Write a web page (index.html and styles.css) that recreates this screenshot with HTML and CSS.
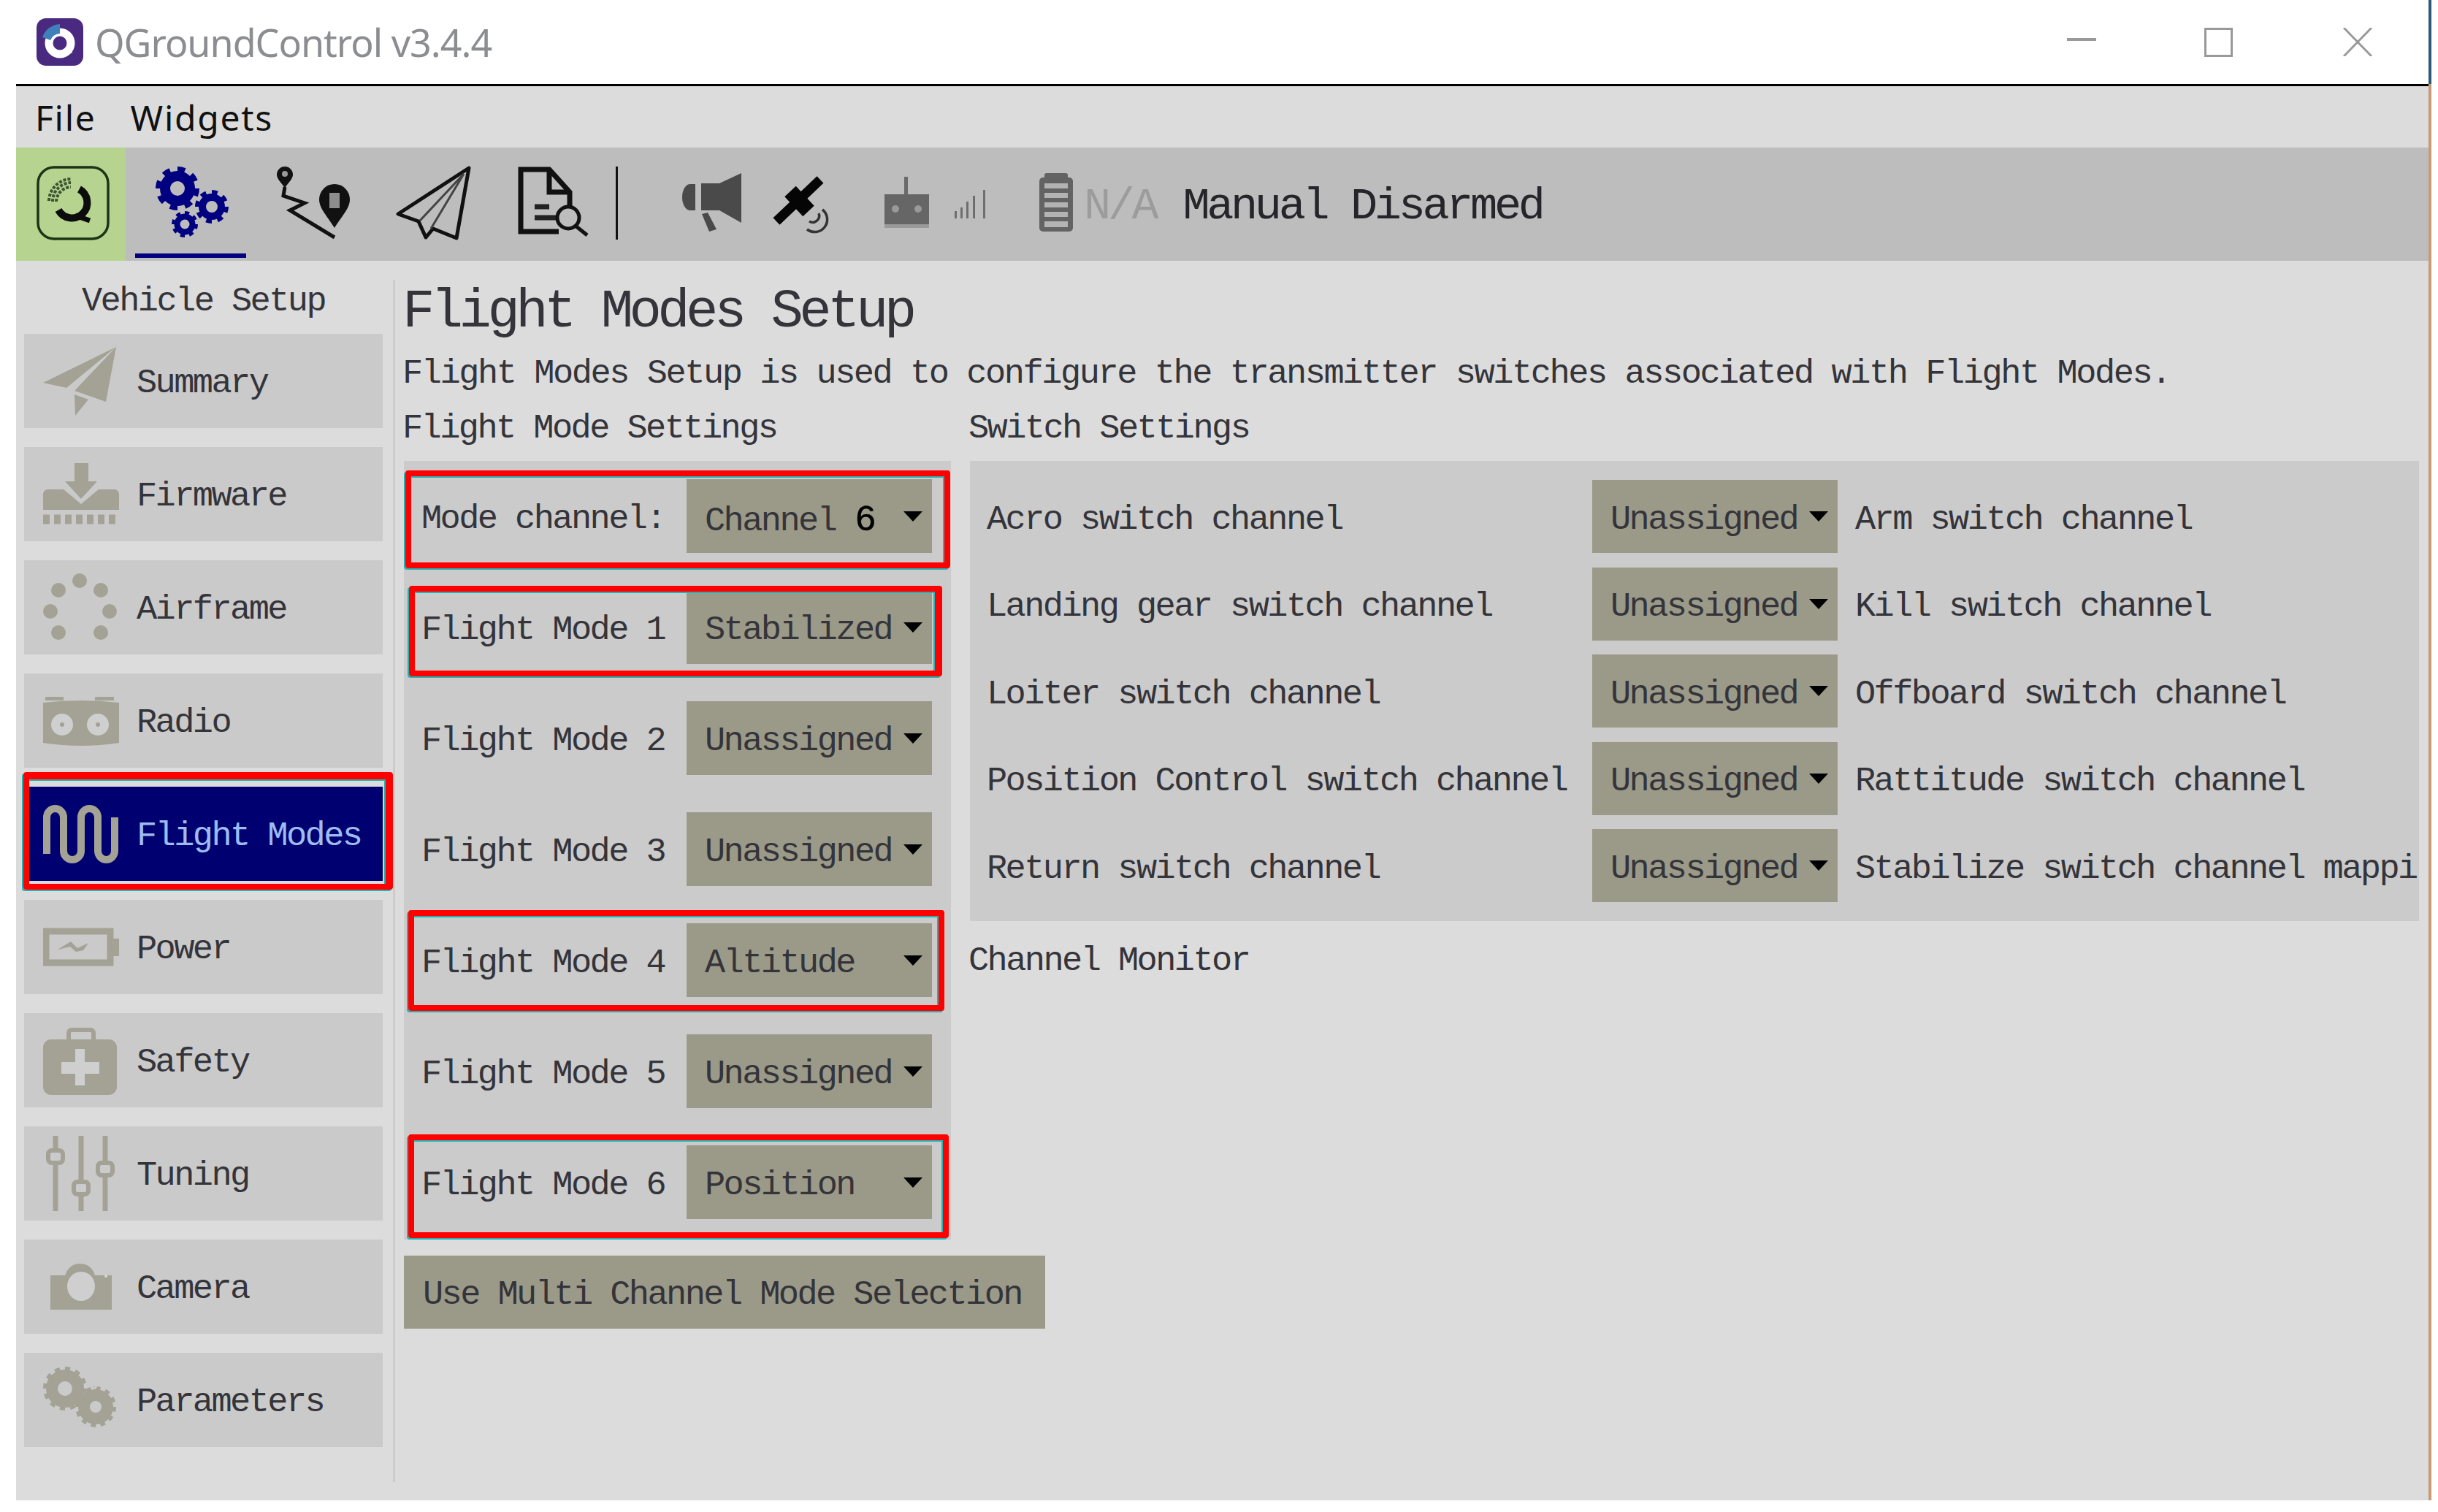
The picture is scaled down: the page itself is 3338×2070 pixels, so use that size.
FILE: index.html
```html
<!DOCTYPE html>
<html lang="en">
	<head>
		<meta charset="utf-8" />
		<title>QGroundControl v3.4.4</title>
		<link rel="stylesheet" href="styles.css">
	</head>
	<body>
		<div class="window">
			<div class="titlebar">
				<svg class="app-icon" width="64" height="65" viewBox="50 24 64 65">
					<rect x="50" y="24" width="64" height="65" rx="13" fill="#4a2a80"/>
					<circle cx="82" cy="58" r="15" fill="none" stroke="#fff" stroke-width="11"/>
					<path d="M88,68 L99,72 L96,60 Z" fill="#fff"/>
					<path d="M58,50 A27,27 0 0 1 82,32 L82,45 A14,14 0 0 0 69,54 Z" fill="#3f80ba"/>
					<circle cx="81" cy="56" r="6" fill="#4a2a80"/>
				</svg>
				<span class="app-title">QGroundControl v3.4.4</span>
				<div class="win-btns">
					<span class="win-min"></span>
					<span class="win-max"></span>
					<svg class="win-close" width="40" height="39" viewBox="0 0 40 39">
						<path d="M1,0 L39,39 M39,0 L1,39" stroke="#999" stroke-width="3"/>
					</svg>
				</div>
			</div>

			<div class="menubar">
				<span class="menu-file">File</span>
				<span>Widgets</span>
			</div>

			<div class="toolbar">
				<div class="tool-logo">
					<svg width="150" height="155" viewBox="22 202 150 155">
						<rect x="52" y="229" width="96" height="98" rx="22" fill="none" stroke="#1f3316" stroke-width="3.5"/>
						<path d="M108.500,259 A21,21 0 1 1 80,287.500" fill="none" stroke="#0c0c0c" stroke-width="10"/>
						<path d="M103,295 L123,302" stroke="#0c0c0c" stroke-width="7"/>
						<path d="M72,276 A26,26 0 0 1 97,250 M67,275 A31,31 0 0 1 97,245" fill="none" stroke="#3c5532" stroke-width="4" stroke-dasharray="4 2"/>
						<path d="M77,276 A21,21 0 0 1 97,256" fill="none" stroke="#3c5532" stroke-width="4" stroke-dasharray="4 2"/>
					</svg>
				</div>
				<svg class="tool-icon" width="170" height="155" viewBox="172 202 170 155">
					<g fill="none" stroke="#000080">
						<circle cx="243" cy="258" r="17" stroke-width="14"/>
						<circle cx="243" cy="258" r="25" stroke-width="10" pathLength="16" stroke-dasharray="1 1"/>
						<circle cx="290" cy="283" r="13" stroke-width="10"/>
						<circle cx="290" cy="283" r="19" stroke-width="8" pathLength="16" stroke-dasharray="1 1"/>
						<circle cx="253" cy="307" r="10.500" stroke-width="8"/>
						<circle cx="253" cy="307" r="15" stroke-width="6" pathLength="16" stroke-dasharray="1 1"/>
					</g>
					<rect x="185" y="347" width="152" height="6" fill="#000080"/>
				</svg>
				<svg class="tool-icon" width="520" height="155" viewBox="342 202 520 155">
					<!-- plan -->
					<path d="M390,257 C383,248 379,244 379,239 A11,11 0 0 1 401,239 C401,244 397,248 390,257 Z" fill="#111"/>
					<circle cx="390" cy="238" r="4" fill="#999"/>
					<path d="M390,256 L388,268 L417,278 L397,288 L458,325" fill="none" stroke="#111" stroke-width="5"/>
					<path d="M458,312 C448,296 437,285 437,273 A21,21 0 0 1 479,273 C479,285 468,296 458,312 Z" fill="#111"/>
					<rect x="451" y="264" width="14" height="21" fill="#8d8d8d"/>
					<!-- fly -->
					<path d="M642,230 L545,293 L573,303 L583,325 L593,313 L625,326 Z" fill="none" stroke="#111" stroke-width="5" stroke-linejoin="round"/>
					<path d="M635,238 L575,302 M635,238 L590,313" stroke="#444" stroke-width="3"/>
					<!-- analyze -->
					<path d="M765,317 H713 V232 H752 L780,263 V283 M752,232 V263 H780" fill="none" stroke="#111" stroke-width="7"/>
					<path d="M732,283 H752" stroke="#222" stroke-width="7"/>
					<path d="M732,298 H763" stroke="#222" stroke-width="7"/>
					<circle cx="778" cy="298" r="15" fill="#bdbdbd" stroke="#111" stroke-width="5"/>
					<path d="M789,310 L804,322" stroke="#111" stroke-width="5"/>
					<rect x="843" y="228" width="3" height="100" fill="#111"/>
				</svg>
				<svg class="tool-icon" width="500" height="155" viewBox="862 202 500 155">
					<!-- messages -->
					<g fill="#4a4a4a">
						<path d="M952,252 H945 A11,18 0 0 0 945,288 H952 Z"/>
						<path d="M960,251 H985 L1015,237 V305 L985,288 H960 Z"/>
						<path d="M961,293 L969,291 L981,314 L971,317 Z"/>
					</g>
					<!-- gps -->
					<path d="M1063,303 L1123,246" stroke="#050505" stroke-width="13"/>
					<path d="M1082,262 L1107,289" stroke="#050505" stroke-width="21"/>
					<path d="M1126,287 A17,17 0 0 1 1105,314 M1121,292 A9,9 0 0 1 1108,303" fill="none" stroke="#333" stroke-width="3.500"/>
					<!-- rc -->
					<rect x="1238" y="242" width="5" height="25" fill="#6a6a6a"/>
					<rect x="1211" y="266" width="61" height="41" fill="#666"/>
					<rect x="1211" y="307" width="61" height="5" fill="#9a9a9a"/>
					<circle cx="1226" cy="286" r="5" fill="#999"/>
					<circle cx="1257" cy="286" r="5" fill="#999"/>
					<!-- signal -->
					<g fill="#6e6e6e">
						<rect x="1307" y="289" width="3" height="10"/>
						<rect x="1315" y="284" width="3" height="15"/>
						<rect x="1323" y="276" width="3" height="23"/>
						<rect x="1332" y="268" width="3" height="31"/>
						<rect x="1346" y="260" width="3" height="39"/>
					</g>
				</svg>
				<svg class="tool-icon tool-battery" width="62" height="155" viewBox="1422 202 62 155">
					<rect x="1430" y="237" width="32" height="10" rx="3" fill="#636363"/>
					<rect x="1423" y="243" width="46" height="74" rx="5" fill="#636363"/>
					<g fill="#b3b3b3">
						<rect x="1430" y="251" width="32" height="7"/>
						<rect x="1430" y="264" width="32" height="7"/>
						<rect x="1430" y="277" width="32" height="7"/>
						<rect x="1430" y="290" width="32" height="7"/>
						<rect x="1430" y="303" width="32" height="8"/>
					</g>
				</svg>
				<span class="tool-na">N/A</span>
				<span class="tool-state">Manual Disarmed</span>
			</div>

			<div class="main">
				<div class="sidebar">
					<div class="side-title">Vehicle Setup</div>

					<div class="side-btn">
						<svg width="104" height="129" viewBox="0 -18 104 129">
							<path d="M100,0 L0,49 L32,56 Z M100,0 L43,60 L86,75 Z M43,65 L44,94 L62,72 Z" fill="#a3a295"/>
						</svg>
						<span>Summary</span>
					</div>

					<div class="side-btn">
						<svg width="104" height="129" viewBox="0 -22 104 129">
							<path d="M43,0 H62 V25 H74 L52,49 L30,25 H43 Z" fill="#a3a295"/>
							<path d="M7,36 H28 L52,56 L76,36 H97 Q104,36 104,44 V64 H0 V44 Q0,36 7,36 Z" fill="#a3a295"/>
							<path d="M0,77 H104" stroke="#a3a295" stroke-width="13" stroke-dasharray="9 6"/>
						</svg>
						<span>Firmware</span>
					</div>

					<div class="side-btn">
						<svg width="104" height="129" viewBox="0 -17 104 129">
							<g fill="#a3a295">
								<circle cx="50" cy="11" r="10"/>
								<circle cx="21" cy="24" r="10"/>
								<circle cx="79" cy="24" r="10"/>
								<circle cx="10" cy="53" r="10"/>
								<circle cx="91" cy="53" r="10"/>
								<circle cx="21" cy="82" r="10"/>
								<circle cx="79" cy="82" r="10"/>
							</g>
						</svg>
						<span>Airframe</span>
					</div>

					<div class="side-btn">
						<svg width="104" height="129" viewBox="0 -31 104 129">
							<path d="M3,1 H28 V6 H3 Z M71,1 H97 V6 H71 Z" fill="#a3a295"/>
							<path d="M0,9 Q52,3 104,9 V64 Q52,72 0,64 Z" fill="#a3a295"/>
							<circle cx="26" cy="39" r="15" fill="#cfcfcf"/>
							<circle cx="75" cy="39" r="15" fill="#cfcfcf"/>
							<circle cx="26" cy="39" r="3" fill="#a3a295"/>
							<circle cx="75" cy="39" r="3" fill="#a3a295"/>
						</svg>
						<span>Radio</span>
					</div>

					<div class="side-btn side-active">
						<svg width="104" height="129" viewBox="0 -25 104 129">
							<path d="M0,62 H5 V17 A11.500,12 0 0 1 28,17 V63 A12,12 0 0 0 52,63 V17 A11.500,12 0 0 1 75,17 V63 A11.500,12 0 0 0 98,63 V17" fill="none" stroke="#a3a295" stroke-width="10"/>
						</svg>
						<span>Flight Modes</span>
					</div>

					<div class="side-btn">
						<svg width="104" height="129" viewBox="0 -38 104 129">
							<rect x="4" y="5" width="88" height="43" fill="none" stroke="#a3a295" stroke-width="9"/>
							<rect x="94" y="15" width="10" height="24" fill="#a3a295"/>
							<path d="M20,30 L38,19 L47,28 L62,21 L55,31 L45,33 L37,26 Z" fill="#a3a295"/>
						</svg>
						<span>Power</span>
					</div>

					<div class="side-btn">
						<svg width="104" height="129" viewBox="0 -20 104 129">
							<rect x="35" y="3" width="34" height="20" rx="4" fill="none" stroke="#a3a295" stroke-width="6"/>
							<rect x="0" y="16" width="101" height="76" rx="11" fill="#a3a295"/>
							<path d="M25,47 H44 V29 H57 V47 H77 V63 H57 V79 H44 V63 H25 Z" fill="#cfcfcf"/>
						</svg>
						<span>Safety</span>
					</div>

					<div class="side-btn">
						<svg width="104" height="129" viewBox="0 -13 104 129">
							<path d="M17,0 V103 M52,0 V103 M85,0 V103" stroke="#a3a295" stroke-width="7"/>
							<rect x="7" y="20" width="20" height="17" rx="5" fill="#cbcbcb" stroke="#a3a295" stroke-width="6"/>
							<rect x="42" y="63" width="20" height="17" rx="5" fill="#cbcbcb" stroke="#a3a295" stroke-width="6"/>
							<rect x="75" y="37" width="20" height="17" rx="5" fill="#cbcbcb" stroke="#a3a295" stroke-width="6"/>
						</svg>
						<span>Tuning</span>
					</div>

					<div class="side-btn">
						<svg width="104" height="129" viewBox="0 -33 104 129">
							<path d="M15,16 H30 Q36,0 50,0 Q66,0 71,16 H94 V63 H10 V16 Z" fill="#a3a295"/>
							<ellipse cx="52" cy="31" rx="19" ry="20" fill="#cfcfcf"/>
							<circle cx="86" cy="17" r="2" fill="#d8d8d8"/>
						</svg>
						<span>Camera</span>
					</div>

					<div class="side-btn">
						<svg width="104" height="129" viewBox="0 -15 104 129">
							<g fill="none" stroke="#a3a295">
								<circle cx="30" cy="34" r="18" stroke-width="16"/>
								<circle cx="30" cy="34" r="27" stroke-width="6" pathLength="24" stroke-dasharray="1 1"/>
								<circle cx="72" cy="59" r="16" stroke-width="16"/>
								<circle cx="72" cy="59" r="25" stroke-width="6" pathLength="24" stroke-dasharray="1 1"/>
							</g>
						</svg>
						<span>Parameters</span>
					</div>
				</div>
				<div class="divider"></div>

				<div class="content">
					<div class="page-title">Flight Modes Setup</div>
					<div class="line page-desc">Flight Modes Setup is used to configure the transmitter switches associated with Flight Modes.</div>

					<div class="cols">
						<div class="col-modes">
							<div class="line">Flight Mode Settings</div>
							<div class="modes-panel">
								<div class="mode-row">
									<span class="mode-label">Mode channel:</span>
									<div class="combo"><span>Channel<b class="added-digit">6</b></span><i class="arrow"></i></div>
								</div>
								<div class="mode-row">
									<span class="mode-label">Flight Mode 1</span>
									<div class="combo"><span>Stabilized</span><i class="arrow"></i></div>
								</div>
								<div class="mode-row">
									<span class="mode-label">Flight Mode 2</span>
									<div class="combo"><span>Unassigned</span><i class="arrow"></i></div>
								</div>
								<div class="mode-row">
									<span class="mode-label">Flight Mode 3</span>
									<div class="combo"><span>Unassigned</span><i class="arrow"></i></div>
								</div>
								<div class="mode-row">
									<span class="mode-label">Flight Mode 4</span>
									<div class="combo"><span>Altitude</span><i class="arrow"></i></div>
								</div>
								<div class="mode-row">
									<span class="mode-label">Flight Mode 5</span>
									<div class="combo"><span>Unassigned</span><i class="arrow"></i></div>
								</div>
								<div class="mode-row">
									<span class="mode-label">Flight Mode 6</span>
									<div class="combo"><span>Position</span><i class="arrow"></i></div>
								</div>
							</div>
							<div class="multi-btn">Use Multi Channel Mode Selection</div>
						</div>

						<div class="col-switches">
							<div class="line">Switch Settings</div>
							<div class="switch-panel">
								<div class="switch-row">
									<span class="switch-label">Acro switch channel</span>
									<div class="combo"><span>Unassigned</span><i class="arrow"></i></div>
									<span class="switch-right">Arm switch channel</span>
								</div>
								<div class="switch-row">
									<span class="switch-label">Landing gear switch channel</span>
									<div class="combo"><span>Unassigned</span><i class="arrow"></i></div>
									<span class="switch-right">Kill switch channel</span>
								</div>
								<div class="switch-row">
									<span class="switch-label">Loiter switch channel</span>
									<div class="combo"><span>Unassigned</span><i class="arrow"></i></div>
									<span class="switch-right">Offboard switch channel</span>
								</div>
								<div class="switch-row">
									<span class="switch-label">Position Control switch channel</span>
									<div class="combo"><span>Unassigned</span><i class="arrow"></i></div>
									<span class="switch-right">Rattitude switch channel</span>
								</div>
								<div class="switch-row">
									<span class="switch-label">Return switch channel</span>
									<div class="combo"><span>Unassigned</span><i class="arrow"></i></div>
									<span class="switch-right">Stabilize switch channel mappi</span>
								</div>
							</div>
							<div class="line monitor-title">Channel Monitor</div>
						</div>
					</div>
				</div>
			</div>

			<!-- red boxes drawn over the screenshot -->
			<div class="mark mark-side"></div>
			<div class="mark mark-channel"></div>
			<div class="mark mark-fm1"></div>
			<div class="mark mark-fm4"></div>
			<div class="mark mark-fm6"></div>
		</div>
	</body>
</html>
```

FILE: styles.css
```css
body, html {
	margin:0;
	padding:0;
	background:#fff;
}
.window {
	position:relative;
	width:3303px;
	margin-left:22px;
	border-right:4px solid #c99a74;
	background:#dcdcdc;
	font-family:"Liberation Mono", monospace;
	color:#34343a;
	font-size:47px;
	letter-spacing:-2.58px;
}

/* title bar */
.titlebar {
	display:flex;
	align-items:center;
	height:115px;
	margin-right:-4px;
	padding-left:28px;
	box-sizing:border-box;
	background:#fff;
	border-right:4px solid #2e5878;
	font-family:"Noto Sans", sans-serif;
}
.app-icon {
	margin-right:16px;
}
.app-title {
	font-size:52px;
	letter-spacing:-1px;
	color:#8b8d90;
}
.win-btns {
	display:flex;
	align-items:center;
	margin-left:auto;
	margin-right:77px;
}
.win-min {
	width:40px;
	height:4px;
	margin-top:-8px;
	margin-right:148px;
	background:#999;
}
.win-max {
	width:33px;
	height:34px;
	margin-right:151px;
	border:3px solid #999;
}

/* menu */
.menubar {
	display:flex;
	align-items:center;
	height:87px;
	padding:0 0 0 26px;
	box-sizing:border-box;
	border-top:3px solid #000;
	font-family:"Noto Sans", sans-serif;
	font-size:48px;
	letter-spacing:1.7px;
	color:#111;
}
.menu-file {
	margin-right:47px;
}

/* toolbar */
.toolbar {
	display:flex;
	align-items:center;
	height:155px;
	background:#bdbdbd;
	font-size:62px;
	letter-spacing:-4.4px;
}
.tool-logo {
	width:150px;
	height:155px;
	background:#b6d48f;
}
.tool-logo svg, .tool-icon {
	display:block;
}
.tool-battery {
	margin-left:60px;
}
.tool-na {
	padding-top:6px;
	color:#9c9c9c;
}
.tool-state {
	margin-left:37px;
	padding-top:6px;
	color:#25252a;
}

/* sidebar */
.main {
	display:flex;
	height:1697px;
}
.sidebar {
	width:491px;
	padding:26px 25px 0 0;
	margin-left:11px;
	margin-right:-11px;
	flex:none;
}
.side-title {
	height:60px;
	line-height:60px;
	margin-bottom:14px;
	text-align:center;
}
.side-btn {
	display:flex;
	align-items:center;
	width:491px;
	height:129px;
	margin-bottom:26px;
	padding-left:26px;
	box-sizing:border-box;
	background:#cacaca;
}
.side-btn svg {
	flex:none;
	margin-right:24px;
}
.side-btn span {
	padding-top:6px;
}
.side-active {
	background:#000070;
	color:#9dbcf0;
}
.divider {
	flex:none;
	width:3px;
	margin:26px 0 25px;
	background:#cbcbcb;
}

/* page */
.content {
	flex:1;
	min-width:0;
	padding:30px 13px 0 12px;
}
.page-title {
	height:80px;
	line-height:80px;
	margin-bottom:15px;
	margin-left:-2px;
	font-size:74px;
	letter-spacing:-5.6px;
}
.line {
	height:60px;
	line-height:60px;
	margin-bottom:15px;
	margin-left:-2px;
	white-space:nowrap;
}
.page-desc {
	letter-spacing:-2.46px;
}
.cols {
	display:flex;
}
.col-modes {
	flex:none;
	width:749px;
	margin-right:26px;
}
.col-switches {
	flex:1;
	min-width:0;
}
.modes-panel {
	height:1066px;
	box-sizing:border-box;
	margin-top:-1px;
	padding-top:25px;
	background:#cbcbcb;
}
.mode-row {
	display:flex;
	align-items:center;
	height:101px;
	margin-bottom:51px;
}
.mode-label {
	width:363px;
	padding-left:24px;
	padding-top:8px;
	white-space:nowrap;
}
.combo {
	display:flex;
	align-items:center;
	justify-content:space-between;
	flex:none;
	width:336px;
	height:100%;
	padding:0 13px 0 25px;
	box-sizing:border-box;
	background:#9b9a88;
}
.combo span {
	padding-top:8px;
}
.added-digit {
	margin-left:27px;
	font-family:"Liberation Sans", sans-serif;
	font-size:49px;
	font-weight:400;
	letter-spacing:0;
	color:#000;
	-webkit-text-stroke:0.6px #000;
}
.arrow {
	flex:none;
	width:0;
	height:0;
	border-left:13px solid transparent;
	border-right:13px solid transparent;
	border-top:14px solid #000;
}
.multi-btn {
	width:878px;
	height:100px;
	line-height:100px;
	margin-top:22px;
	padding-top:4px;
	padding-left:26px;
	box-sizing:border-box;
	background:#9b9a88;
	white-space:nowrap;
}
.switch-panel {
	display:flex;
	flex-direction:column;
	gap:19.5px;
	box-sizing:border-box;
	height:630px;
	margin-top:-1px;
	padding-top:26px;
	background:#cbcbcb;
	overflow:hidden;
}
.switch-row {
	display:flex;
	align-items:center;
	height:100px;
	flex:none;
	white-space:nowrap;
}
.switch-label {
	width:852px;
	flex:none;
	padding-left:23px;
	padding-top:8px;
	box-sizing:border-box;
}
.switch-right {
	margin-left:24px;
	padding-top:8px;
}
.monitor-title {
	margin-top:25px;
}

/* red annotation boxes */
.mark {
	position:absolute;
	box-sizing:border-box;
	border:8px solid #f00;
	border-radius:4px;
	box-shadow:-2px 2px 0 #20b4b4, inset -2px 2px 0 #20b4b4;
}
.mark-side {
	left:10px;
	top:1057px;
	width:506px;
	height:161px;
	border-width:10px 10px 8px 8px;
}
.mark-channel {
	left:533px;
	top:644px;
	width:746px;
	height:134px;
}
.mark-fm1 {
	left:538px;
	top:802px;
	width:730px;
	height:124px;
	border-right-width:10px;
}
.mark-fm4 {
	left:537px;
	top:1246px;
	width:734px;
	height:138px;
}
.mark-fm6 {
	left:537px;
	top:1553px;
	width:740px;
	height:142px;
}
```
